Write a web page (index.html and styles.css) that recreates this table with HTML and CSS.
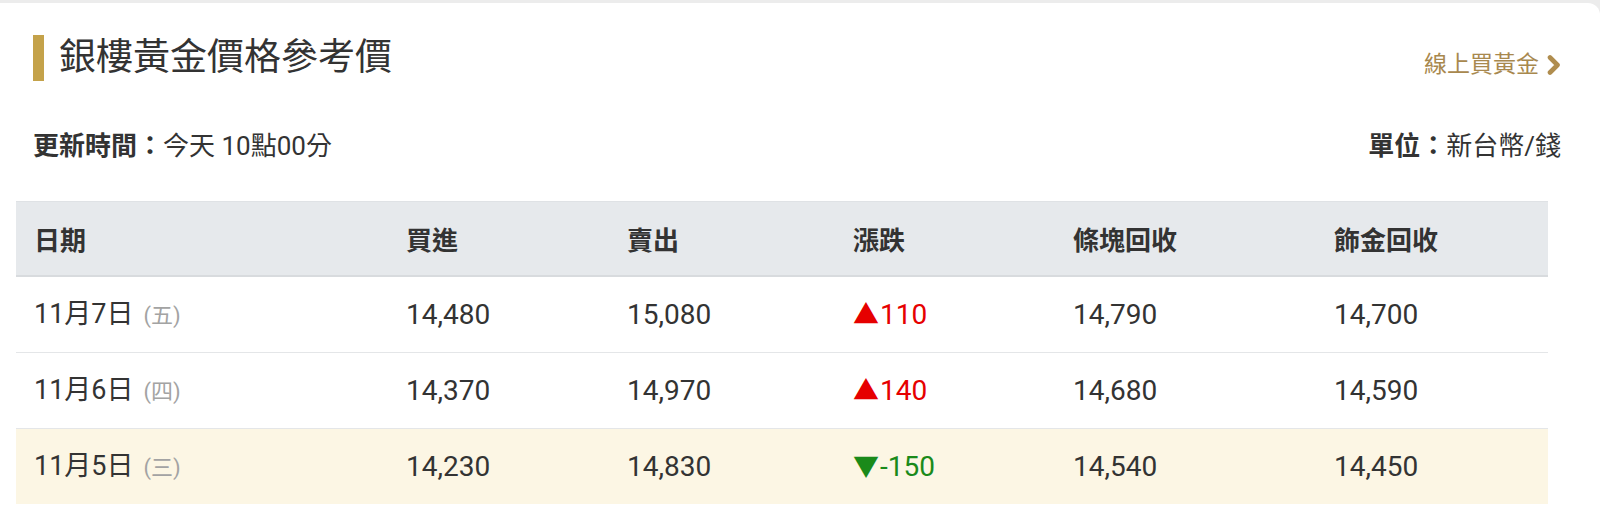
FILE: index.html
```html
<!DOCTYPE html>
<html lang="zh-Hant">
<head>
<meta charset="utf-8">
<title>銀樓黃金價格參考價</title>
<link rel="stylesheet" href="styles.css">
</head>
<body>
<div class="card">
  <div class="head">
    <h1 class="title"><span class="bar"></span>銀樓黃金價格參考價</h1>
    <a class="link" href="#">線上買黃金<svg class="chev" width="14" height="24" viewBox="0 0 14 24"><polyline points="3,4.5 10.5,12 3,19.5" fill="none" stroke="#b08d4e" stroke-width="4.6" stroke-linecap="round" stroke-linejoin="round"/></svg></a>
  </div>
  <div class="info">
    <div><b>更新時間：</b>今天 10點00分</div>
    <div><b>單位：</b>新台幣/錢</div>
  </div>
  <table class="prices">
    <colgroup>
      <col class="c1"><col class="c2"><col class="c3"><col class="c4"><col class="c5"><col class="c6">
    </colgroup>
    <thead>
      <tr><th>日期</th><th>買進</th><th>賣出</th><th>漲跌</th><th>條塊回收</th><th>飾金回收</th></tr>
    </thead>
    <tbody>
      <tr><td class="date">11月7日<span class="wd">(五)</span></td><td>14,480</td><td>15,080</td><td class="up"><span class="tri">▲</span>110</td><td>14,790</td><td>14,700</td></tr>
      <tr><td class="date">11月6日<span class="wd">(四)</span></td><td>14,370</td><td>14,970</td><td class="up"><span class="tri">▲</span>140</td><td>14,680</td><td>14,590</td></tr>
      <tr class="hl"><td class="date">11月5日<span class="wd">(三)</span></td><td>14,230</td><td>14,830</td><td class="down"><span class="tri">▼</span>-150</td><td>14,540</td><td>14,450</td></tr>
    </tbody>
  </table>
</div>
</body>
</html>
```
FILE: styles.css
```css
html, body {
  margin: 0;
  padding: 0;
}
body {
  background: #ececec;
  font-family: Roboto, "Noto Sans CJK TC", sans-serif;
  color: #333;
  width: 1600px;
  height: 518px;
  overflow: hidden;
}
.card {
  margin-top: 3px;
  background: #fff;
  border-top-right-radius: 12px;
  height: 515px;
  padding: 32px 39px 0 16px;
  box-sizing: border-box;
}
.head {
  display: flex;
  justify-content: space-between;
  align-items: flex-end;
  padding-left: 17px;
  height: 46px;
}
.title {
  display: flex;
  align-items: center;
  margin: 0;
  font-size: 37px;
  font-weight: 400;
  line-height: 46px;
  color: #333;
}
.bar {
  width: 11px;
  height: 46px;
  background: #c4a24a;
  margin-right: 15px;
}
.link {
  display: flex;
  align-items: center;
  font-size: 23px;
  line-height: 30px;
  color: #a8884e;
  text-decoration: none;
  margin-bottom: 1px;
}
.chev {
  margin-left: 8px;
}
.info {
  display: flex;
  justify-content: space-between;
  padding-left: 17px;
  margin-top: 47px;
  font-size: 26px;
  line-height: 36px;
  color: #333;
}
.info b {
  font-weight: 700;
}
.prices {
  margin-top: 37px;
  width: 1532px;
  border-collapse: collapse;
  table-layout: fixed;
  font-size: 28px;
}
.c1 { width: 372px; }
.c2 { width: 221px; }
.c3 { width: 226px; }
.c4 { width: 220px; }
.c5 { width: 261px; }
.c6 { width: 232px; }
.prices th {
  background: #e6e9ec;
  height: 73px;
  padding: 0 0 0 18px;
  text-align: left;
  font-size: 26px;
  font-weight: 700;
  color: #333;
  border-top: 1px solid #dfe2e5;
  border-bottom: 2px solid #d8dbde;
}
.prices td {
  height: 75px;
  padding: 0 0 0 18px;
  line-height: 32px;
  border-bottom: 1px solid #e4e6e8;
  color: #333;
}
.prices td.date {
  font-size: 27px;
}
.prices tr.hl td {
  background: #fcf6e4;
  border-bottom: none;
}
.wd {
  font-size: 22px;
  color: #a3a3a3;
  margin-left: 10px;
}
.prices td.up { color: #e60000; }
.prices td.down { color: #1a8a1a; }
.tri {
  font-size: 26px;
  margin-right: 1px;
}
```
